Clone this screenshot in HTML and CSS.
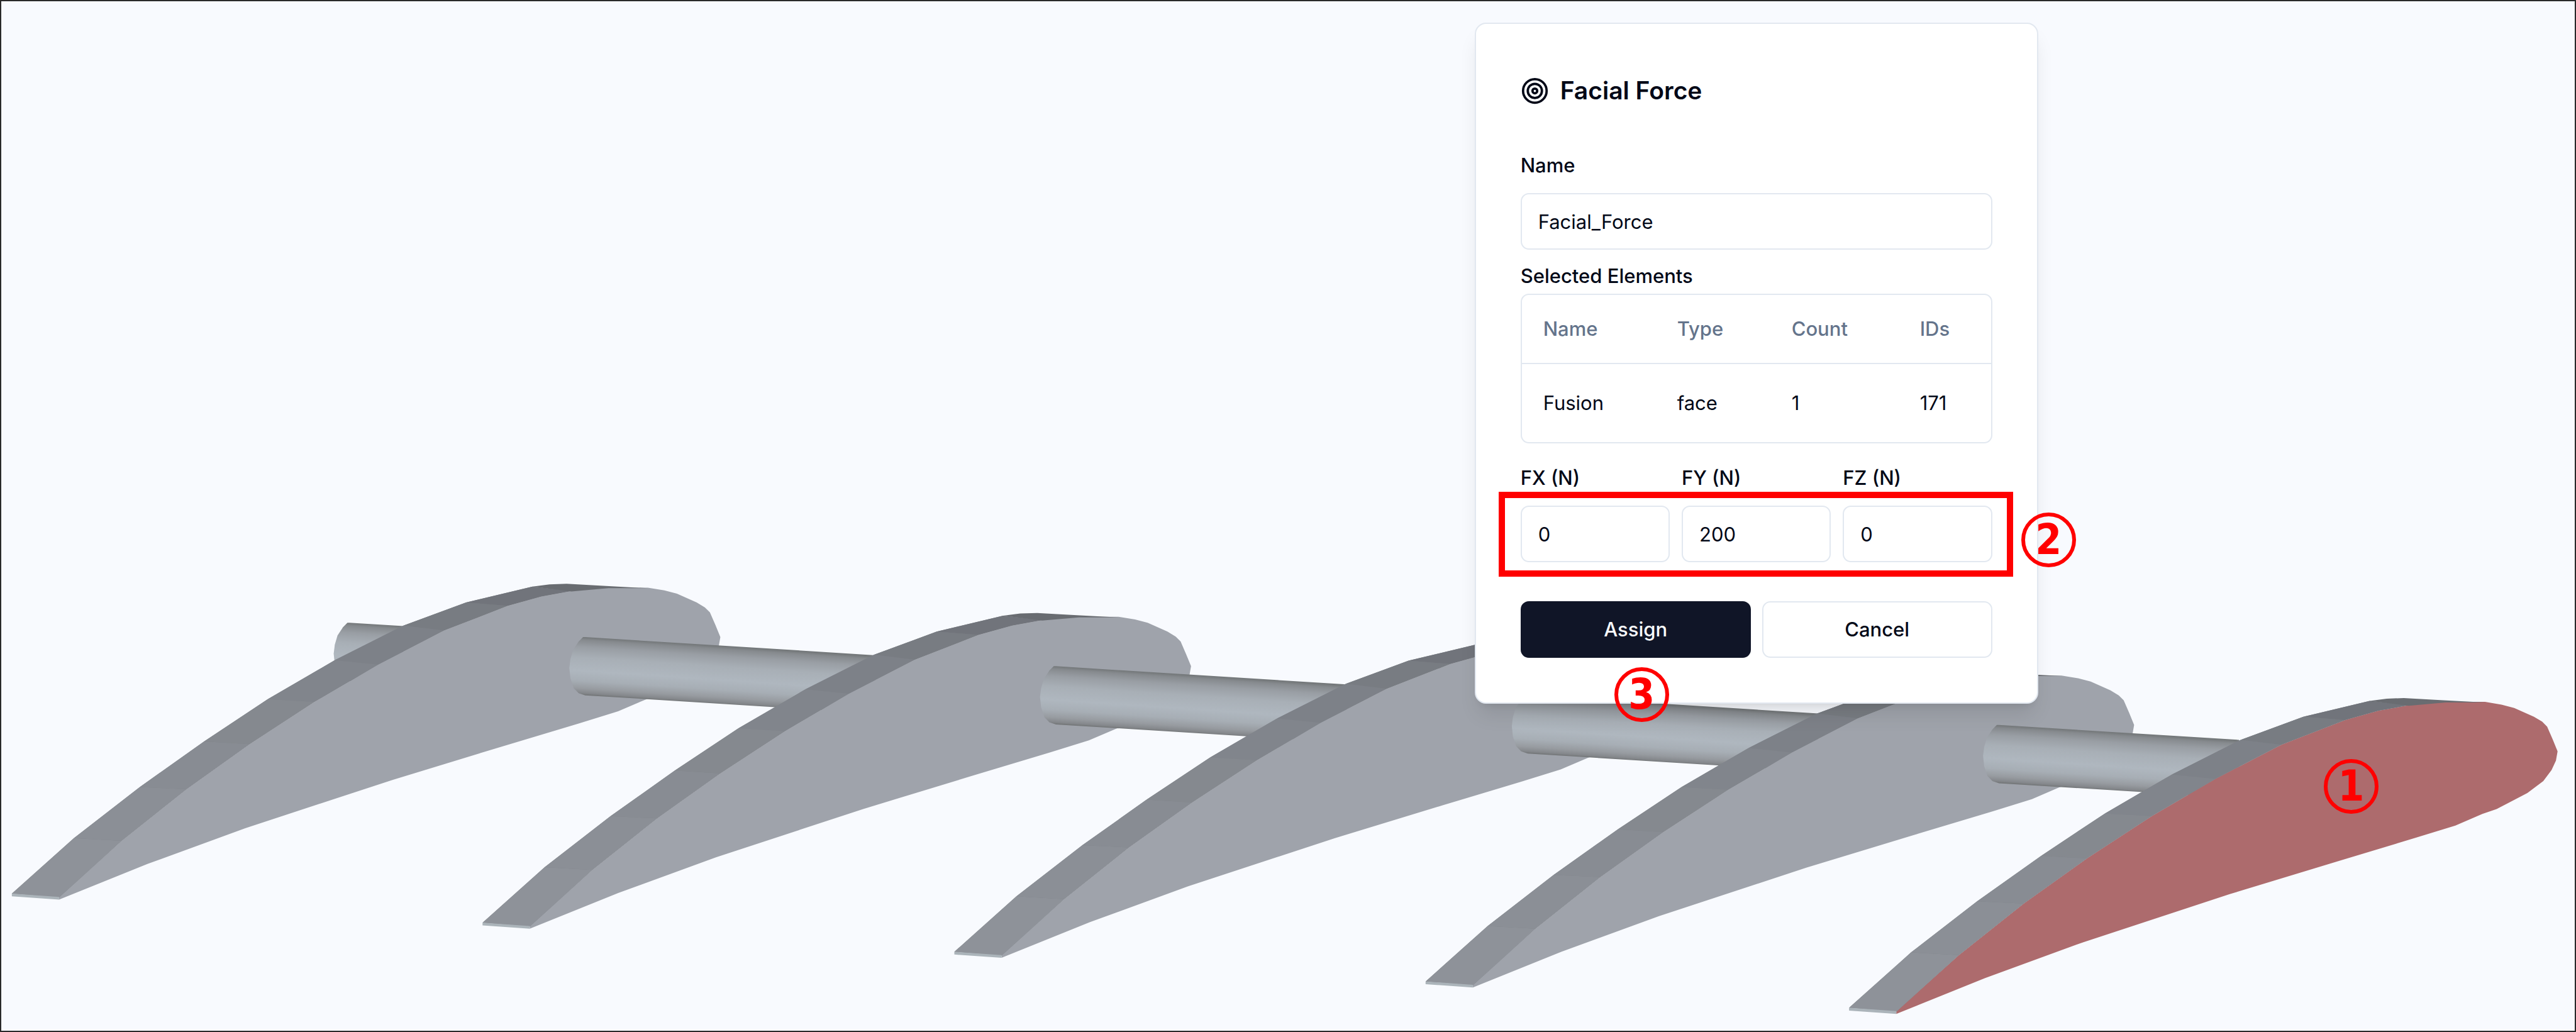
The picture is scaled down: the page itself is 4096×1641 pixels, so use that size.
FILE: index.html
```html
<!DOCTYPE html>
<html lang="en">
<head>
<meta charset="utf-8">
<title>Facial Force</title>
<link rel="stylesheet" href="styles.css">
</head>
<body>
<main class="viewport">
  <svg class="scene" viewBox="0 0 4689 1879" preserveAspectRatio="xMidYMid meet" role="img" aria-label="Wing ribs joined by a spar">
    <defs>
      <linearGradient id="tube" gradientUnits="userSpaceOnUse" x1="1065" y1="1160" x2="1058" y2="1266">
        <stop offset="0" stop-color="#74787a"/>
        <stop offset="0.05" stop-color="#868a8e"/>
        <stop offset="0.17" stop-color="#999ea4"/>
        <stop offset="0.35" stop-color="#a8afb6"/>
        <stop offset="0.58" stop-color="#afb7bf"/>
        <stop offset="0.75" stop-color="#a7aeb5"/>
        <stop offset="0.88" stop-color="#979ba0"/>
        <stop offset="0.96" stop-color="#84878b"/>
        <stop offset="1" stop-color="#6e7172"/>
      </linearGradient>
      <path id="spar" fill="url(#tube)" d="M1065 1160 L1594 1193 V1299 L1065 1266 L1053 1262 L1044 1253 L1038 1235 L1036 1216 L1038 1200 L1043 1183 L1053 1168 L1061 1160 Z"/>
      <path id="spar-end" fill="url(#tube)" d="M1065 1160 L1502 1187 V1293 L1065 1266 L1053 1262 L1044 1253 L1038 1235 L1036 1216 L1038 1200 L1043 1183 L1053 1168 L1061 1160 Z"/>
      <path id="spar-start" fill="url(#tube)" d="M1065 1160 L1163 1166 V1272 L1065 1266 L1053 1262 L1044 1253 L1038 1235 L1036 1216 L1038 1200 L1043 1183 L1053 1168 L1061 1160 Z"/>
      <path id="face" d="M107 1633 L221 1531 L339 1437 L454 1355 L572 1278 L688 1210 L808 1148 L924 1103 L985 1086 L1040 1076 L1107 1070 L1179 1070 L1209 1075 L1232 1081 L1268 1097 L1283 1106 L1292 1115 L1302 1138 L1311 1160 L1308 1177 L1300 1194 L1285 1214 L1256 1236 L1200 1265 L1174 1274 L1125 1295 L1054 1317 L911 1360 L714 1420 L446 1508 L268 1573 L107 1638 Z"/>
      <g id="skin">
        <path fill="#81858b" d="M21 1627 L134 1526 L254 1433 L371 1350 L487 1273 L609 1202 L734 1139 L848 1097 L969 1068 L1040 1076 L985 1086 L924 1103 L808 1148 L688 1210 L572 1278 L454 1355 L339 1437 L221 1531 L107 1634 Z"/>
        <path fill="#8e9299" d="M21 1627 L134 1526 L221 1531 L107 1634 Z"/>
        <path fill="#8b8f96" d="M134 1526 L254 1433 L339 1437 L221 1531 Z"/>
        <path fill="#888c93" d="M254 1433 L371 1350 L454 1355 L339 1437 Z"/>
        <path fill="#85898f" d="M371 1350 L487 1273 L572 1278 L454 1355 Z"/>
        <path fill="#81858c" d="M487 1273 L609 1202 L688 1210 L572 1278 Z"/>
        <path fill="#7d8188" d="M609 1202 L734 1139 L808 1148 L688 1210 Z"/>
        <path fill="#787c82" d="M734 1139 L848 1097 L924 1103 L808 1148 Z"/>
        <path fill="#71747b" d="M848 1097 L969 1068 L1040 1076 L985 1086 L924 1103 Z"/>
        <path fill="#696c71" d="M969 1068 L1000 1064 L1031 1063 L1103 1067 L1179 1071 L1107 1071 L1040 1077 Z"/>
        <path fill="#abb4ba" d="M21 1627 L107 1633 V1638 L21 1632 Z"/>
      </g>
      <g id="rib">
        <use href="#face" fill="#9fa3ab"/>
        <use href="#skin"/>
      </g>
    </defs>
    <use href="#spar-start" x="-429" y="-26"/>
    <use href="#rib"/>
    <use href="#spar"/>
    <use href="#rib" x="857" y="53"/>
    <use href="#spar" x="857" y="53"/>
    <use href="#rib" x="1716" y="106"/>
    <use href="#spar" x="1716" y="106"/>
    <use href="#rib" x="2574" y="160"/>
    <use href="#spar-end" x="2574" y="160"/>
    <use href="#face" x="3345" y="208" fill="#ad6b6d"/>
    <use href="#skin" x="3345" y="208"/>
  </svg>

  <form class="panel" onsubmit="return false">
    <h1 class="panel-title">
      <svg class="panel-icon" viewBox="0 0 24 24" fill="none" stroke="currentColor" stroke-width="2" aria-hidden="true">
        <circle cx="12" cy="12" r="10"/><circle cx="12" cy="12" r="6"/><circle cx="12" cy="12" r="2"/>
      </svg>
      Facial Force
    </h1>
    <label class="label" for="name">Name</label>
    <input class="input name-input" id="name" type="text" value="Facial_Force">
    <p class="label" id="elements-label">Selected Elements</p>
    <div class="table-box">
      <table class="table" aria-labelledby="elements-label">
        <thead>
          <tr><th class="col-name">Name</th><th class="col-type">Type</th><th class="col-count">Count</th><th>IDs</th></tr>
        </thead>
        <tbody>
          <tr><td>Fusion</td><td>face</td><td>1</td><td>171</td></tr>
        </tbody>
      </table>
    </div>
    <div class="forces">
      <label class="label" for="fx">FX (N)</label>
      <label class="label" for="fy">FY (N)</label>
      <label class="label" for="fz">FZ (N)</label>
      <input class="input" id="fx" type="text" inputmode="decimal" value="0">
      <input class="input" id="fy" type="text" inputmode="decimal" value="200">
      <input class="input" id="fz" type="text" inputmode="decimal" value="0">
      <span class="highlight"></span>
      <span class="step step-two">2</span>
    </div>
    <div class="actions">
      <button class="button button-primary" type="submit">Assign</button>
      <button class="button" type="button">Cancel</button>
      <span class="step step-three">3</span>
    </div>
  </form>
  <span class="step step-one">1</span>
</main>
</body>
</html>
```
FILE: styles.css
```css
*, *::before, *::after { box-sizing: border-box; }

body {
  margin: 0;
  background: #f8fafe;
  color: #020817;
  font: 400 31px/44px Inter, "Liberation Sans", sans-serif;
}

.viewport {
  position: relative;
  min-height: 100vh;
  overflow: hidden;
  border: 2px solid #2a2a2a;
  background: #f8fafe;
}

.scene {
  position: absolute;
  inset: -2px;
  width: calc(100% + 4px);
  height: calc(100% + 4px);
}

.panel {
  position: relative;
  width: 896px;
  margin: 34px 0 0 57.25%;
  padding: 80px 71px 71px;
  border: 2px solid #e2e8f0;
  border-radius: 18px;
  background: #fff;
  box-shadow: 0 22px 33px -7px rgb(0 0 0 / 0.1), 0 9px 13px -9px rgb(0 0 0 / 0.1);
}

.panel-title {
  display: flex;
  align-items: center;
  gap: 18px;
  margin: 0 0 71px;
  font-size: 39px;
  font-weight: 600;
  line-height: 52px;
}

.panel-icon { width: 45px; height: 45px; }

.label {
  display: block;
  margin: 0;
  font-weight: 500;
}

.input {
  width: 100%;
  min-width: 0;
  height: 90px;
  padding: 0 26px;
  border: 2px solid #e2e8f0;
  border-radius: 13px;
  background: #fff;
  color: inherit;
  font: inherit;
}

.name-input { display: block; margin: 22px 0 20px; }

.table-box {
  margin: 6px 0 33px;
  border: 2px solid #e2e8f0;
  border-radius: 13px;
}

.table {
  width: 100%;
  table-layout: fixed;
  border-collapse: collapse;
  text-align: left;
}

.table th {
  height: 109px;
  padding: 0 34px;
  border-bottom: 2px solid #e2e8f0;
  color: #64748b;
  font-weight: 500;
}

.table td { height: 125px; padding: 0 34px; }

.col-name { width: 213px; }
.col-type { width: 182px; }
.col-count { width: 204px; }

.forces {
  position: relative;
  display: grid;
  grid-template-columns: repeat(3, 1fr);
  gap: 22px 19px;
  margin-bottom: 62px;
}

.highlight {
  position: absolute;
  inset: auto -33px -23px -35px;
  height: 135px;
  border: 10px solid #f00;
  pointer-events: none;
}

.actions {
  position: relative;
  display: grid;
  grid-template-columns: repeat(2, 1fr);
  gap: 18px;
}

.button {
  height: 90px;
  border: 2px solid #e2e8f0;
  border-radius: 13px;
  background: #fff;
  color: inherit;
  font: inherit;
  font-weight: 500;
}

.button-primary {
  border-color: #101527;
  background: #101527;
  color: #f8fafc;
}

.step {
  position: absolute;
  display: flex;
  align-items: center;
  justify-content: center;
  width: 87px;
  height: 87px;
  border: 6px solid #f00;
  border-radius: 50%;
  color: #f00;
  font: 700 67px/75px "DejaVu Sans Condensed", "DejaVu Sans", sans-serif;
}

.step-one { top: 73.6%; left: 90.25%; }
.step-two { right: -133px; bottom: -8px; }
.step-three { top: 105px; left: 149px; }
```
